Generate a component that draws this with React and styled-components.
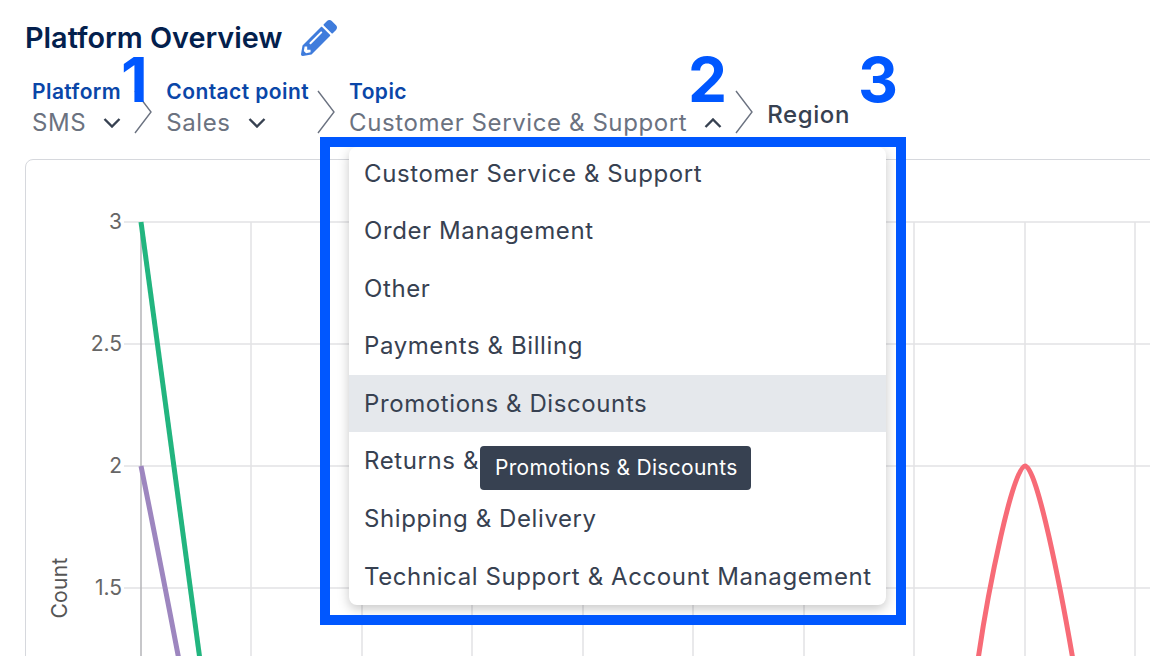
import React from 'react';
import styled, { createGlobalStyle } from 'styled-components';
import { FaPencilAlt } from 'react-icons/fa';

const Global = createGlobalStyle`
  html, body { margin: 0; padding: 0; background: #fff; }
  body { font-family: Inter, "Noto Sans", sans-serif; }
`;

const Page = styled.div`
  position: relative;
  width: 1150px;
  height: 656px;
  overflow: hidden;
  padding: 19px 0 0 25px;
  box-sizing: border-box;
  background: #fff;
`;
const TitleRow = styled.div`
  display: flex;
  align-items: center;
  gap: 18px;
  height: 38px;
`;
const Title = styled.h1`
  margin: 0;
  font-size: 28.8px;
  line-height: 38px;
  font-weight: 600;
  color: #03204d;
`;
const PencilButton = styled.span`
  display: flex;
  color: #3f7cdc;
  font-size: 36px;
`;
const Crumbs = styled.div`
  display: flex;
  align-items: flex-start;
  height: 82px;
  padding: 20px 0 0 7px;
  box-sizing: border-box;
  margin-bottom: 20px;
`;
const Crumb = styled.div`
  display: flex;
  flex-direction: column;
  margin-right: ${(p) => p.$end}px;
`;
const CrumbLabel = styled.div`
  font-size: 21px;
  line-height: 30px;
  font-weight: 600;
  letter-spacing: 0.42px;
  color: #0a46a8;
  white-space: nowrap;
`;
const CrumbValue = styled.div`
  display: flex;
  align-items: center;
  gap: 17px;
  font-size: 24px;
  line-height: 32px;
  letter-spacing: 0.6px;
  color: #6b7280;
  white-space: nowrap;
`;
const CrumbIcon = styled.svg`
  width: 18px;
  height: 10px;
  flex: none;
  fill: none;
  stroke: #374151;
  stroke-width: 2.4;
`;
const Separator = styled.svg`
  width: 18px;
  height: 44px;
  flex: none;
  margin: 13px 14px 0 0;
  fill: none;
  stroke: #6b7280;
  stroke-width: 1.4;
`;
const PlainCrumb = styled.div`
  font-size: 24px;
  line-height: 32px;
  font-weight: 500;
  letter-spacing: 0.6px;
  color: #374151;
  margin-top: 22px;
`;
const Panel = styled.div`
  width: 1160px;
  height: 520px;
  border: 1px solid #d6d8dd;
  border-radius: 8px;
  overflow: hidden;
`;
const Chart = styled.svg`
  display: block;
`;
const Dropdown = styled.div`
  position: absolute;
  left: 349px;
  top: 147px;
  width: 537px;
  height: 458px;
  background: #fff;
  border-radius: 8px;
  box-shadow: 0 4px 12px rgba(0, 0, 0, 0.22);
  overflow: hidden;
`;
const OptionList = styled.div`
  margin-top: -2.3px;
`;
const Option = styled.div`
  height: 57.55px;
  line-height: 57px;
  padding-left: 15px;
  font-size: 24px;
  letter-spacing: 0.6px;
  color: #374151;
  white-space: nowrap;
  background: ${(p) => (p.$active ? '#e5e8ec' : 'transparent')};
`;
const Tooltip = styled.div`
  position: absolute;
  left: 480px;
  top: 446px;
  width: 271px;
  height: 44px;
  box-sizing: border-box;
  padding-left: 15px;
  line-height: 44px;
  border-radius: 4px;
  background: #374151;
  color: #fff;
  font-size: 21px;
  letter-spacing: 0.28px;
  white-space: nowrap;
`;
const Frame = styled.div`
  position: absolute;
  left: 320px;
  top: 137px;
  width: 586px;
  height: 488px;
  box-sizing: border-box;
  border: 10px solid #0057ff;
  pointer-events: none;
`;
const Marker = styled.div`
  position: absolute;
  left: ${(p) => p.$x}px;
  top: 46px;
  font-size: 62px;
  line-height: 68px;
  font-weight: 700;
  color: #0057ff;
`;

const options = [
  'Customer Service & Support',
  'Order Management',
  'Other',
  'Payments & Billing',
  'Promotions & Discounts',
  'Returns & Exchanges',
  'Shipping & Delivery',
  'Technical Support & Account Management',
];

const Down = () => (
  <CrumbIcon viewBox="0 0 18 10"><path d="M1.5 1 L9 8.5 L16.5 1" /></CrumbIcon>
);
const Up = () => (
  <CrumbIcon viewBox="0 0 18 10"><path d="M1.5 9 L9 1.5 L16.5 9" /></CrumbIcon>
);
const Sep = () => (
  <Separator viewBox="0 0 18 44"><path d="M1 1 L17 22 L1 43" /></Separator>
);

const gridY = [222, 344, 466, 588];
const gridX = [251, 362, 472, 583, 693, 804, 914, 1025, 1135];
const ticks = [['3', 222], ['2.5', 344], ['2', 466], ['1.5', 588]];

const App = () => (
  <Page>
    <Global />
    <TitleRow>
      <Title>Platform Overview</Title>
      <PencilButton><FaPencilAlt /></PencilButton>
    </TitleRow>
    <Crumbs>
      <Crumb $end={13}>
        <CrumbLabel>Platform</CrumbLabel>
        <CrumbValue>SMS <Down /></CrumbValue>
      </Crumb>
      <Sep />
      <Crumb $end={8}>
        <CrumbLabel>Contact point</CrumbLabel>
        <CrumbValue>Sales <Down /></CrumbValue>
      </Crumb>
      <Sep />
      <Crumb $end={13}>
        <CrumbLabel>Topic</CrumbLabel>
        <CrumbValue>Customer Service &amp; Support <Up /></CrumbValue>
      </Crumb>
      <Sep />
      <PlainCrumb>Region</PlainCrumb>
    </Crumbs>
    <Panel>
      <Chart width="1125" height="497" viewBox="26 160 1125 497">
        {gridY.map((y) => <line key={y} x1="124" x2="1150" y1={y} y2={y} stroke="#e2e2e4" strokeWidth="1.5" />)}
        {gridX.map((x) => <line key={x} x1={x} x2={x} y1="222" y2="656" stroke="#e2e2e4" strokeWidth="1.5" />)}
        <line x1="141" x2="141" y1="222" y2="656" stroke="#b4b4b8" strokeWidth="1.5" />
        {ticks.map(([t, y]) => (
          <text key={t} x="122" y={y + 7} textAnchor="end" fontFamily="Inter, sans-serif" fontSize="21" fill="#666">{t}</text>
        ))}
        <text transform="translate(67 588) rotate(-90)" textAnchor="middle" fontFamily="Inter, sans-serif" fontSize="21" letterSpacing="0.3" fill="#555">Count</text>
        <path d="M141 222 L200 660" fill="none" stroke="#22b57f" strokeWidth="5" />
        <path d="M141 466 Q 158 550 179 660" fill="none" stroke="#9d86bf" strokeWidth="5" />
        <path d="M978 660 C 988 590 1013 466 1025 466 C 1037 466 1061 590 1073 660" fill="none" stroke="#f76b77" strokeWidth="5" />
      </Chart>
    </Panel>
    <Dropdown>
      <OptionList>
        {options.map((o, i) => <Option key={o} $active={i === 4}>{o}</Option>)}
      </OptionList>
    </Dropdown>
    <Tooltip>Promotions &amp; Discounts</Tooltip>
    <Frame />
    <Marker $x={121}>1</Marker>
    <Marker $x={688}>2</Marker>
    <Marker $x={858}>3</Marker>
  </Page>
);

export default App;
